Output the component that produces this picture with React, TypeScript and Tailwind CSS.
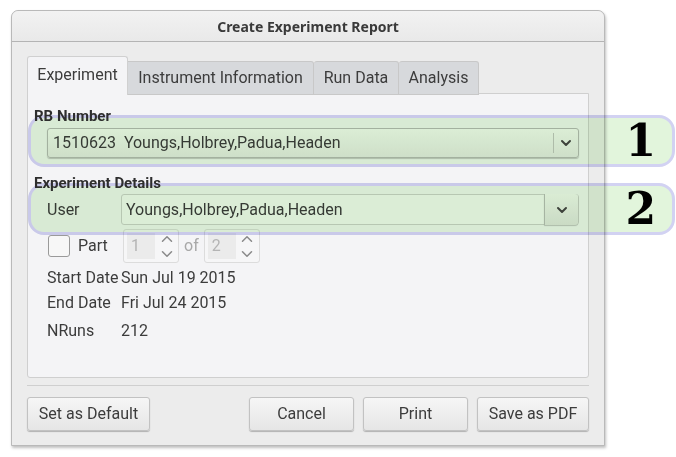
import { ChevronDown, ChevronUp } from "lucide-react";

const font = { fontFamily: "Roboto, 'Liberation Sans', sans-serif" };

const Spin = ({ value }: { value: string }) => (
  <div className="flex h-[34px] w-[56px] items-center rounded-[3px] border border-[#dcdcdc] bg-[#f6f6f7] pl-[3px]">
    <div className="flex h-[26px] w-[28px] items-center bg-[#ebebeb] pl-[4px] text-[16px] text-[#b4b4b4]">{value}</div>
    <div className="flex flex-1 flex-col items-center text-[#8a8a8a]">
      <ChevronUp size={18} strokeWidth={2} className="-mb-[3px]" />
      <ChevronDown size={18} strokeWidth={2} />
    </div>
  </div>
);

const Btn = ({ label, w }: { label: string; w: string }) => (
  <button
    className={`h-[34px] ${w} rounded-[3px] border border-[#c2c2c2] bg-gradient-to-b from-[#f6f6f6] to-[#e6e6e6] text-[16px] text-[#3c3c3c] shadow-[0_1px_1px_rgba(0,0,0,0.25)]`}
  >
    {label}
  </button>
);

const Pill = ({ top, n }: { top: string; n: string }) => (
  <div
    className={`absolute left-[28px] ${top} z-10 flex h-[52px] w-[647px] items-center justify-end rounded-[16px] border-[3px] border-[#d2d2f2] bg-[#e2f5dc] pr-[16px] mix-blend-multiply`}
  >
    <span className="text-[44px] font-bold leading-none text-black" style={{ fontFamily: "'DejaVu Serif', serif" }}>
      {n}
    </span>
  </div>
);

export default function App() {
  return (
    <div className="relative h-[457px] w-[676px] overflow-hidden bg-white" style={font}>
      <div className="ml-[11px] mt-[10px] flex h-[436px] w-[594px] flex-col rounded-t-[7px] border border-[#b9b9b9] bg-[#ececec] shadow-[1px_2px_3px_rgba(0,0,0,0.25)]">
        <div className="flex h-[31px] items-center justify-center rounded-t-[7px] border-b border-[#b4b4b4] bg-gradient-to-b from-[#f2f2f2] to-[#e9e9e9] text-[14px] font-bold text-[#3a3a3a]" style={{ fontFamily: "'Noto Sans', 'Open Sans', sans-serif" }}>
          Create Experiment Report
        </div>
        <div className="flex flex-1 flex-col px-[15px] pt-[14px]">
          <div className="relative z-[5] flex h-[39px] items-end text-[16px] text-[#3c3c3c]">
            <div className="flex h-[39px] w-[101px] items-center justify-center rounded-t-[3px] border border-b-0 border-[#d0d0d0] bg-[#f4f4f6] pb-[2px]">
              Experiment
            </div>
            <div className="flex h-[34px] w-[186px] items-center justify-center rounded-tr-[3px] border border-l-0 border-[#c8c8c8] bg-[#d7d9dc]">
              Instrument Information
            </div>
            <div className="flex h-[34px] w-[85px] items-center justify-center rounded-t-[3px] border border-l-0 border-[#c8c8c8] bg-[#d7d9dc]">
              Run Data
            </div>
            <div className="flex h-[34px] w-[80px] items-center justify-center rounded-t-[3px] border border-l-0 border-[#c8c8c8] bg-[#d7d9dc]">
              Analysis
            </div>
          </div>
          <div className="-mt-[2px] flex h-[285px] flex-col rounded-b-[3px] border border-[#cfcfcf] bg-[#f4f4f6] pl-[6px] pr-[9px] pt-[13px] text-[16px] text-[#3c3c3c]">
            <div className="relative z-20 h-[18px] text-[15px] font-bold leading-[18px] text-[#2e2e2e]">RB Number</div>
            <div className="ml-[13px] mt-[3px] flex h-[30px] items-center rounded-[3px] border border-[#b8b8b8] bg-gradient-to-b from-[#f7f7f7] to-[#e9e9e9] pl-[5px] shadow-[0_1px_1px_rgba(0,0,0,0.2)]">
              <span className="flex-1">1510623&nbsp;&nbsp;Youngs,Holbrey,Padua,Headen</span>
              <div className="flex h-[20px] w-[25px] items-center justify-center border-l border-[#c4c4c4] text-[#444]">
                <ChevronDown size={16} strokeWidth={3} />
              </div>
            </div>
            <div className="relative z-20 mt-[16px] h-[18px] text-[15px] font-bold leading-[18px] text-[#2e2e2e]">Experiment Details</div>
            <div className="mt-[2px] flex h-[31px] items-center">
              <span className="w-[87px] pl-[13px]">User</span>
              <div className="flex h-[31px] flex-1 items-center rounded-[3px] border border-[#cfcfcf] bg-[#f7f7f8]">
                <span className="flex-1 pl-[4px]">Youngs,Holbrey,Padua,Headen</span>
                <div className="flex h-[31px] w-[34px] items-center justify-center rounded-r-[3px] border-l border-[#bcbcbc] bg-gradient-to-b from-[#f6f6f6] to-[#e4e4e4] text-[#444] shadow-[0_1px_1px_rgba(0,0,0,0.2)]">
                  <ChevronDown size={16} strokeWidth={3} />
                </div>
              </div>
            </div>
            <div className="mt-[4px] flex h-[34px] items-center">
              <div className="ml-[14px] h-[22px] w-[22px] rounded-[3px] border border-[#9a9a9a] bg-[#f7f7f7]" />
              <span className="ml-[8px] w-[45px]">Part</span>
              <Spin value="1" />
              <span className="mx-[5px] text-[#a8a8a8]">of</span>
              <Spin value="2" />
            </div>
            <div className="ml-[13px] mt-[5px] flex flex-col gap-[5px] leading-[20px]">
              <div className="flex"><span className="w-[74px]">Start Date</span><span>Sun Jul 19 2015</span></div>
              <div className="flex"><span className="w-[74px]">End Date</span><span>Fri Jul 24 2015</span></div>
              <div className="mt-[3px] flex"><span className="w-[74px]">NRuns</span><span>212</span></div>
            </div>
          </div>
          <div className="mt-[7px] border-t border-[#cfcfcf] border-b-white" />
          <div className="mt-[11px] flex gap-[9px]">
            <Btn label="Set as Default" w="w-[123px]" />
            <div className="flex-1" />
            <Btn label="Cancel" w="w-[105px]" />
            <Btn label="Print" w="w-[105px]" />
            <Btn label="Save as PDF" w="w-[112px]" />
          </div>
        </div>
      </div>
      <Pill top="top-[115px]" n="1" />
      <Pill top="top-[183px]" n="2" />
    </div>
  );
}
